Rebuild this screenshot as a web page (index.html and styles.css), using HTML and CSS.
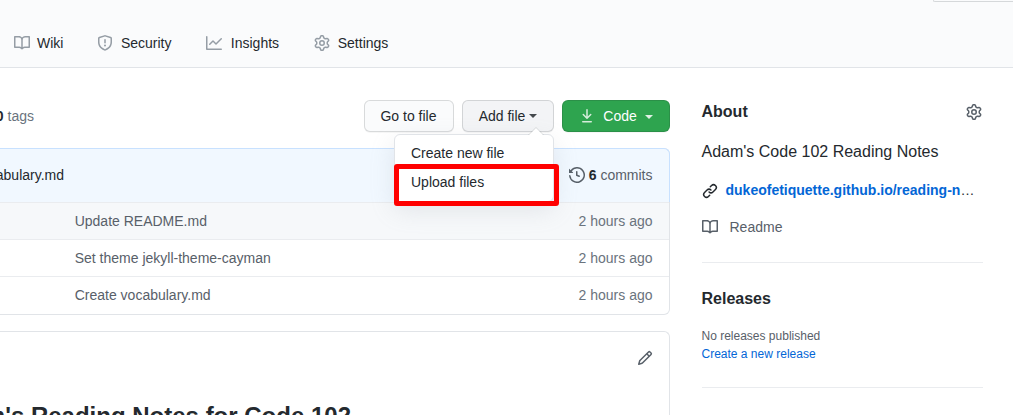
FILE: index.html
```
<!DOCTYPE html>
<html lang="en">
<head>
<meta charset="utf-8">
<title>Repository</title>
<link rel="stylesheet" href="styles.css">
</head>
<body>
<svg class="sprite" aria-hidden="true">
  <symbol id="book" viewBox="0 0 16 16"><path fill-rule="evenodd" d="M0 1.75A.75.75 0 01.75 1h4.253c1.227 0 2.317.59 3 1.501A3.744 3.744 0 0111.006 1h4.245a.75.75 0 01.75.75v10.5a.75.75 0 01-.75.75h-4.507a2.25 2.25 0 00-1.591.659l-.622.621a.75.75 0 01-1.06 0l-.622-.621A2.25 2.25 0 005.258 13H.75a.75.75 0 01-.75-.75V1.75zm8.755 3a2.25 2.25 0 012.25-2.25H14.5v9h-3.757c-.71 0-1.4.201-1.992.572l.004-7.322zm-1.504 7.324l.004-5.073-.002-2.253A2.25 2.25 0 005.003 2.5H1.5v9h3.757a3.75 3.75 0 011.994.574z"/></symbol>
  <symbol id="shield" viewBox="0 0 16 16"><path fill-rule="evenodd" d="M7.467.133a1.75 1.75 0 011.066 0l5.25 1.68A1.75 1.75 0 0115 3.48V7c0 1.566-.32 3.182-1.303 4.682-.983 1.498-2.585 2.813-5.032 3.855a1.7 1.7 0 01-1.33 0c-2.447-1.042-4.049-2.357-5.032-3.855C1.32 10.182 1 8.566 1 7V3.48a1.75 1.75 0 011.217-1.667l5.25-1.68zm.61 1.429a.25.25 0 00-.153 0l-5.25 1.68a.25.25 0 00-.174.238V7c0 1.358.275 2.666 1.057 3.86.784 1.194 2.121 2.34 4.366 3.297a.2.2 0 00.154 0c2.245-.956 3.582-2.104 4.366-3.298C13.225 9.666 13.5 8.36 13.5 7V3.48a.25.25 0 00-.174-.237l-5.25-1.68zM9 10.5a1 1 0 11-2 0 1 1 0 012 0zm-.25-5.75a.75.75 0 10-1.5 0v3a.75.75 0 001.5 0v-3z"/></symbol>
  <symbol id="graph" viewBox="0 0 16 16"><path fill-rule="evenodd" d="M1.5 1.75a.75.75 0 00-1.5 0v12.5c0 .414.336.75.75.75h14.5a.75.75 0 000-1.5H1.5V1.75zm14.28 2.53a.75.75 0 00-1.06-1.06L10 7.94 7.53 5.47a.75.75 0 00-1.06 0L3.22 8.72a.75.75 0 001.06 1.06L7 7.06l2.47 2.47a.75.75 0 001.06 0l5.25-5.25z"/></symbol>
  <symbol id="gear" viewBox="0 0 16 16"><path fill-rule="evenodd" d="M7.429 1.525a6.593 6.593 0 011.142 0c.036.003.108.036.137.146l.289 1.105c.147.56.55.967.997 1.189.174.086.341.183.501.29.417.278.97.423 1.53.27l1.102-.303c.11-.03.175.016.195.046.219.31.41.641.573.989.014.031.022.11-.059.19l-.815.806c-.411.406-.562.957-.53 1.456a4.588 4.588 0 010 .582c-.032.499.119 1.05.53 1.456l.815.806c.08.08.073.159.059.19a6.494 6.494 0 01-.573.99c-.02.029-.086.074-.195.045l-1.103-.303c-.559-.153-1.112-.008-1.529.27-.16.107-.327.204-.5.29-.449.222-.851.628-.998 1.189l-.289 1.105c-.029.11-.101.143-.137.146a6.613 6.613 0 01-1.142 0c-.036-.003-.108-.037-.137-.146l-.289-1.105c-.147-.56-.55-.967-.997-1.189a4.502 4.502 0 01-.501-.29c-.417-.278-.97-.423-1.53-.27l-1.102.303c-.11.03-.175-.016-.195-.046a6.492 6.492 0 01-.573-.989c-.014-.031-.022-.11.059-.19l.815-.806c.411-.406.562-.957.53-1.456a4.587 4.587 0 010-.582c.032-.499-.119-1.05-.53-1.456l-.815-.806c-.08-.08-.073-.159-.059-.19a6.44 6.44 0 01.573-.99c.02-.029.086-.075.195-.045l1.103.303c.559.153 1.112.008 1.529-.27.16-.107.327-.204.5-.29.449-.222.851-.628.998-1.189l.289-1.105c.029-.11.101-.143.137-.146zM8 0c-.236 0-.47.01-.701.03-.743.065-1.29.615-1.458 1.261l-.29 1.106c-.017.066-.078.158-.211.224a5.994 5.994 0 00-.668.386c-.123.082-.233.09-.3.071L3.27 2.776c-.644-.177-1.392.02-1.82.63a7.977 7.977 0 00-.704 1.217c-.315.675-.111 1.422.363 1.891l.815.806c.05.048.098.147.088.294a6.084 6.084 0 000 .772c.01.147-.038.246-.088.294l-.815.806c-.474.469-.678 1.216-.363 1.891.2.428.436.835.704 1.218.428.609 1.176.806 1.82.63l1.103-.303c.066-.019.176-.011.299.071.213.143.436.272.668.386.133.066.194.158.212.224l.289 1.106c.169.646.715 1.196 1.458 1.26a8.094 8.094 0 001.402 0c.743-.064 1.29-.614 1.458-1.26l.29-1.106c.017-.066.078-.158.211-.224a5.98 5.98 0 00.668-.386c.123-.082.233-.09.3-.071l1.102.302c.644.177 1.392-.02 1.82-.63.268-.382.505-.789.704-1.217.315-.675.111-1.422-.364-1.891l-.814-.806c-.05-.048-.098-.147-.088-.294a6.1 6.1 0 000-.772c-.01-.147.039-.246.088-.294l.814-.806c.475-.469.679-1.216.364-1.891a7.992 7.992 0 00-.704-1.218c-.428-.609-1.176-.806-1.82-.63l-1.103.303c-.066.019-.176.011-.299-.071a5.991 5.991 0 00-.668-.386c-.133-.066-.194-.158-.212-.224L10.16 1.29C9.99.645 9.444.095 8.701.031A8.094 8.094 0 008 0zm1.5 8a1.5 1.5 0 11-3 0 1.5 1.5 0 013 0zM11 8a3 3 0 11-6 0 3 3 0 016 0z"/></symbol>
  <symbol id="history" viewBox="0 0 16 16"><path fill-rule="evenodd" d="M1.643 3.143L.427 1.927A.25.25 0 000 2.104V5.75c0 .138.112.25.25.25h3.646a.25.25 0 00.177-.427L2.715 4.215a6.5 6.5 0 11-1.18 4.458.75.75 0 10-1.493.154 8.001 8.001 0 101.6-5.684zM7.75 4a.75.75 0 01.75.75v2.992l2.028.812a.75.75 0 01-.557 1.392l-2.5-1A.75.75 0 017 8.25v-3.5A.75.75 0 017.75 4z"/></symbol>
  <symbol id="download" viewBox="0 0 16 16"><path fill-rule="evenodd" d="M7.47 10.78a.75.75 0 001.06 0l3.75-3.75a.75.75 0 00-1.06-1.06L8.75 8.44V1.75a.75.75 0 00-1.5 0v6.69L4.78 5.97a.75.75 0 00-1.06 1.06l3.75 3.75zM3.75 13a.75.75 0 000 1.5h8.5a.75.75 0 000-1.5h-8.5z"/></symbol>
  <symbol id="link" viewBox="0 0 16 16"><path fill-rule="evenodd" d="M7.775 3.275a.75.75 0 001.06 1.06l1.25-1.25a2 2 0 112.83 2.83l-2.5 2.5a2 2 0 01-2.83 0 .75.75 0 00-1.06 1.06 3.5 3.5 0 004.95 0l2.5-2.5a3.5 3.5 0 00-4.95-4.95l-1.25 1.25zm-4.69 9.64a2 2 0 010-2.83l2.5-2.5a2 2 0 012.83 0 .75.75 0 001.06-1.06 3.5 3.5 0 00-4.95 0l-2.5 2.5a3.5 3.5 0 004.95 4.95l1.25-1.25a.75.75 0 00-1.06-1.06l-1.25 1.25a2 2 0 01-2.83 0z"/></symbol>
  <symbol id="pencil" viewBox="0 0 16 16"><path fill-rule="evenodd" d="M11.013 1.427a1.75 1.75 0 012.474 0l1.086 1.086a1.75 1.75 0 010 2.474l-8.61 8.61c-.21.21-.47.364-.756.445l-3.251.93a.75.75 0 01-.927-.928l.929-3.25a1.75 1.75 0 01.445-.758l8.61-8.61zm1.414 1.06a.25.25 0 00-.354 0L10.811 3.75l1.439 1.44 1.263-1.263a.25.25 0 000-.354l-1.086-1.086zM11.189 6.25L9.75 4.81l-6.286 6.287a.25.25 0 00-.064.108l-.558 1.953 1.953-.558a.249.249 0 00.108-.064l6.286-6.286z"/></symbol>
</svg>

<header class="header">
  <div class="header-action"></div>
  <nav class="tabs">
    <a class="tab"><svg class="icon"><use href="#book"/></svg>Wiki</a>
    <a class="tab"><svg class="icon"><use href="#shield"/></svg>Security</a>
    <a class="tab tab-wide"><svg class="icon"><use href="#graph"/></svg>Insights</a>
    <a class="tab"><svg class="icon"><use href="#gear"/></svg>Settings</a>
  </nav>
</header>

<main class="layout">
  <section class="content">
    <div class="toolbar">
      <div class="tags"><span><b>0</b> tags</span></div>
      <a class="btn btn-go">Go to file</a>
      <div class="dropdown">
        <a class="btn btn-add">Add file<span class="caret"></span></a>
        <div class="menu">
          <a class="menu-item">Create new file</a>
          <a class="menu-item">Upload files</a>
          <div class="highlight"></div>
        </div>
      </div>
      <a class="btn btn-code"><svg class="icon"><use href="#download"/></svg><span class="code-label">Code</span><span class="caret"></span></a>
    </div>

    <div class="files">
      <div class="commit">
        <div class="commit-message"><span>abulary.md</span></div>
        <div class="commits"><svg class="icon"><use href="#history"/></svg><span><b>6</b> commits</span></div>
      </div>
      <div class="row row-active"><span>Update README.md</span><span class="age">2 hours ago</span></div>
      <div class="row"><span>Set theme jekyll-theme-cayman</span><span class="age">2 hours ago</span></div>
      <div class="row"><span>Create vocabulary.md</span><span class="age">2 hours ago</span></div>
    </div>

    <article class="readme">
      <div class="readme-bar"><svg class="icon"><use href="#pencil"/></svg></div>
      <h1 class="readme-title"><span>Adam's Reading Notes for Code 102</span></h1>
    </article>
  </section>

  <aside class="sidebar">
    <section class="about">
      <div class="about-head"><h2 class="heading">About</h2><svg class="icon"><use href="#gear"/></svg></div>
      <p class="description">Adam's Code 102 Reading Notes</p>
      <div class="site"><svg class="icon"><use href="#link"/></svg><span class="url"><a>dukeofetiquette.github.io/reading-n</a>…</span></div>
      <div class="readme-link"><svg class="icon"><use href="#book"/></svg>Readme</div>
    </section>
    <section class="releases">
      <h2 class="heading">Releases</h2>
      <p class="none">No releases published</p>
      <a class="create">Create a new release</a>
    </section>
  </aside>
</main>
</body>
</html>
```
FILE: styles.css
```
* { box-sizing: border-box; }

body {
  margin: 0;
  height: 415px;
  overflow: hidden;
  background: #fff;
  color: #24292e;
  font: 14px/21px "Liberation Sans", Arial, sans-serif;
}

h1, h2, p { margin: 0; }

.sprite { display: none; }

.icon {
  flex: none;
  width: 16px;
  height: 16px;
  fill: currentColor;
}

.header {
  height: 68px;
  background: #fafbfc;
  border-bottom: 1px solid #e1e4e8;
}

.header-action {
  height: 2px;
  margin-left: 933px;
  border: solid #d5d8da;
  border-width: 0 0 1px 1px;
  border-bottom-left-radius: 6px;
}

.tabs {
  display: flex;
  gap: 34px;
  padding: 31px 0 0 13.5px;
}

.tab {
  display: flex;
  align-items: center;
  gap: 7.5px;
}

.tab-wide {
  gap: 9.3px;
  margin-right: 1.2px;
}

.tab .icon {
  margin-bottom: 1px;
  color: #959da5;
}

.layout {
  display: flex;
  gap: 31.5px;
  padding-top: 32px;
}

.content { width: 670px; }

.toolbar {
  display: flex;
  gap: 8px;
  height: 32px;
}

.tags {
  display: flex;
  justify-content: flex-end;
  align-items: center;
  width: 34px;
  margin-right: auto;
  white-space: nowrap;
  color: #6a737d;
}

.tags b, .commits b { color: #24292e; }

.btn {
  display: flex;
  align-items: center;
  justify-content: center;
  height: 32px;
  border: 1px solid rgba(27, 31, 35, .15);
  border-radius: 6px;
  background: #fafbfc;
  box-shadow: 0 1px 0 rgba(27, 31, 35, .04);
}

.btn-go {
  width: 90px;
  padding-right: 1px;
}

.btn-add {
  width: 92px;
  background: #f3f4f6;
}

.btn-code {
  width: 108px;
  background: #2ea44f;
  color: #fff;
}

.btn-code .icon { opacity: .8; }

.code-label { margin: 0 4px 0 8px; }

.caret {
  margin-left: 4px;
  border: 4px solid transparent;
  border-top-color: currentColor;
  border-bottom: 0;
  opacity: .85;
}

.btn-code .caret { margin-top: 1px; }

.dropdown { position: relative; }

.menu {
  position: absolute;
  top: 34px;
  right: 0;
  z-index: 2;
  width: 160px;
  height: 68px;
  padding: 4px 0;
  border: 1px solid #e1e4e8;
  border-radius: 6px;
  background: #fff;
  box-shadow: 0 8px 24px rgba(149, 157, 165, .2);
}

.menu::before,
.menu::after {
  content: "";
  position: absolute;
  border: solid transparent;
  border-top: 0;
}

.menu::before {
  top: -8px;
  right: 9px;
  border-width: 0 8px 8px;
  border-bottom-color: rgba(27, 31, 35, .12);
}

.menu::after {
  top: -7px;
  right: 10px;
  border-width: 0 7px 7px;
  border-bottom-color: #fff;
}

.menu-item {
  display: block;
  padding: 4px 16px;
}

.highlight {
  position: absolute;
  top: 28.5px;
  left: -1.5px;
  width: 165.5px;
  height: 42px;
  border: 5px solid #f00;
  border-radius: 3px;
}

.files {
  margin-top: 16px;
  height: 167px;
  border: 1px solid #e1e4e8;
  border-left: 0;
  border-radius: 0 6px 6px 0;
}

.commit {
  display: flex;
  align-items: center;
  justify-content: space-between;
  height: 54px;
  margin: -1px -1px 0 0;
  padding-right: 16.5px;
  border: 1px solid #c8e1ff;
  border-width: 1px 1px 0 0;
  border-top-right-radius: 6px;
  background: #f1f8ff;
}

.commit-message {
  display: flex;
  justify-content: flex-end;
  width: 64px;
}

.commits {
  display: flex;
  align-items: center;
  gap: 4px;
  color: #586069;
}

.commits .icon { margin-bottom: 1px; }

.row {
  display: flex;
  justify-content: space-between;
  height: 37px;
  padding: 8px 16.5px 0 74.7px;
  border-top: 1px solid #eaecef;
  color: #586069;
}

.row-active { background: #f6f8fa; }

.age { color: #6a737d; }

.readme {
  height: 84px;
  margin-top: 16px;
  border: 1px solid #e1e4e8;
  border-width: 1px 1px 0 0;
  border-radius: 0 6px 0 0;
}

.readme-bar {
  display: flex;
  justify-content: flex-end;
  padding: 18px 16px 0;
  color: #586069;
}

.readme-title {
  display: flex;
  justify-content: flex-end;
  width: 351px;
  margin-top: 35px;
  font-size: 24px;
  line-height: 30px;
  white-space: nowrap;
}

.sidebar { width: 281px; }

.heading {
  font-size: 16px;
  line-height: 24px;
}

.about {
  height: 163px;
  border-bottom: 1px solid #eaecef;
}

.about-head {
  display: flex;
  justify-content: space-between;
  align-items: center;
  padding-right: 1px;
}

.about-head .icon { color: #586069; }

.description {
  margin-top: 16px;
  font-size: 16px;
  line-height: 24px;
}

.site {
  display: flex;
  align-items: center;
  gap: 8px;
  margin-top: 16px;
}

.url a {
  color: #0366d6;
  font-weight: bold;
}

.readme-link {
  display: flex;
  align-items: center;
  gap: 12px;
  margin-top: 16px;
  color: #586069;
}

.readme-link .icon { margin-bottom: 1px; }

.releases {
  height: 125px;
  padding-top: 24px;
  border-bottom: 1px solid #eaecef;
}

.none {
  margin-top: 16px;
  font-size: 12px;
  line-height: 18px;
  color: #586069;
}

.create {
  display: block;
  font-size: 12px;
  line-height: 18px;
  color: #0366d6;
}
```
